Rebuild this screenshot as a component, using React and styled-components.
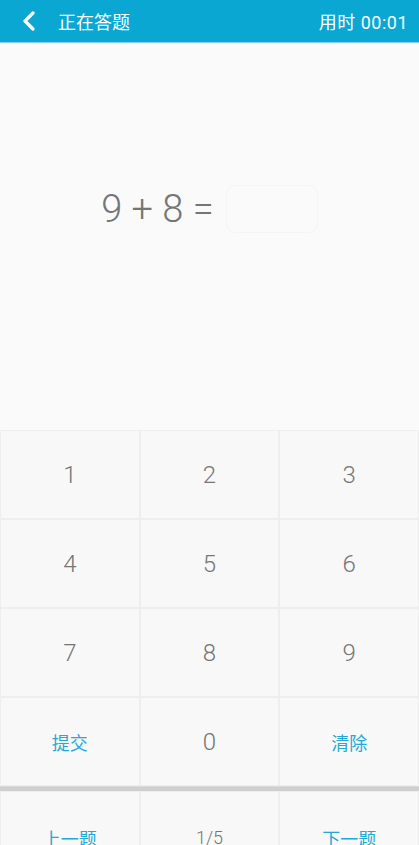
import styled, { createGlobalStyle } from 'styled-components'

const GlobalStyle = createGlobalStyle`
  html, body {
    margin: 0;
    padding: 0;
    background: #fafafa;
    font-family: Roboto, "Noto Sans CJK SC", sans-serif;
  }
  * { box-sizing: border-box; }
`

const Page = styled.div`
  width: 419px;
  height: 845px;
  overflow: hidden;
  display: flex;
  flex-direction: column;
  background: #fafafa;
`

const Header = styled.header`
  height: 43px;
  flex: none;
  display: flex;
  align-items: center;
  padding: 0 11px 1px 20px;
  background: #09a7d1;
  border-bottom: 1px solid #7fd0e8;
  color: #ffffff;
  font-size: 18px;
`

const BackButton = styled.button`
  border: 0;
  background: none;
  padding: 0;
  width: 18px;
  height: 22px;
  display: flex;
  align-items: center;
  justify-content: center;
  cursor: pointer;
  margin-right: 20px;
`

const Title = styled.span`
  flex: 1;
`

const Timer = styled.span`
  letter-spacing: 0.5px;
`

const Question = styled.main`
  height: 387px;
  flex: none;
  display: flex;
  justify-content: center;
  align-items: flex-start;
  padding-top: 142px;
`

const Equation = styled.div`
  display: flex;
  align-items: center;
  gap: 12px;
  color: #757575;
  font-size: 38px;
  font-weight: 300;
  height: 48px;
`

const AnswerBox = styled.div`
  width: 92px;
  height: 48px;
  border-radius: 9px;
  background: #fafafa;
  border: 1px solid #f4f4f4;
`

const Keypad = styled.div`
  flex: none;
  display: grid;
  grid-template-columns: repeat(3, 1fr);
  grid-auto-rows: 89px;
`

const Key = styled.button`
  border: 1px solid #eeeeee;
  background: #f8f8f8;
  font-family: inherit;
  font-size: ${p => (p.$action ? '18px' : '24px')};
  font-weight: ${p => (p.$action ? 400 : 300)};
  color: ${p => (p.$action ? '#22a9d4' : '#757575')};
  display: flex;
  align-items: center;
  justify-content: center;
  padding: 0;
  cursor: pointer;
`

const Divider = styled.div`
  flex: none;
  height: 5px;
  background: #cfcfcf;
  border-top: 1px solid #d9d9d9;
`

const NavRow = styled.div`
  flex: none;
  display: grid;
  grid-template-columns: repeat(3, 1fr);
  height: 89px;
`

const NavKey = styled(Key)`
  font-size: 18px;
  padding-top: 4px;
`

const keys = ['1', '2', '3', '4', '5', '6', '7', '8', '9']

export default function App() {
  return (
    <Page>
      <GlobalStyle />
      <Header>
        <BackButton aria-label="返回">
          <svg width="14" height="20" viewBox="0 0 14 20">
            <path d="M11 2 L3 10 L11 18" fill="none" stroke="#ffffff" strokeWidth="3.2" strokeLinecap="round" strokeLinejoin="round" />
          </svg>
        </BackButton>
        <Title>正在答题</Title>
        <Timer>用时 00:01</Timer>
      </Header>
      <Question>
        <Equation>
          <span>9 + 8 =</span>
          <AnswerBox />
        </Equation>
      </Question>
      <Keypad>
        {keys.map(k => (
          <Key key={k}>{k}</Key>
        ))}
        <Key $action>提交</Key>
        <Key>0</Key>
        <Key $action>清除</Key>
      </Keypad>
      <Divider />
      <NavRow>
        <NavKey $action>上一题</NavKey>
        <NavKey>1/5</NavKey>
        <NavKey $action>下一题</NavKey>
      </NavRow>
    </Page>
  )
}
